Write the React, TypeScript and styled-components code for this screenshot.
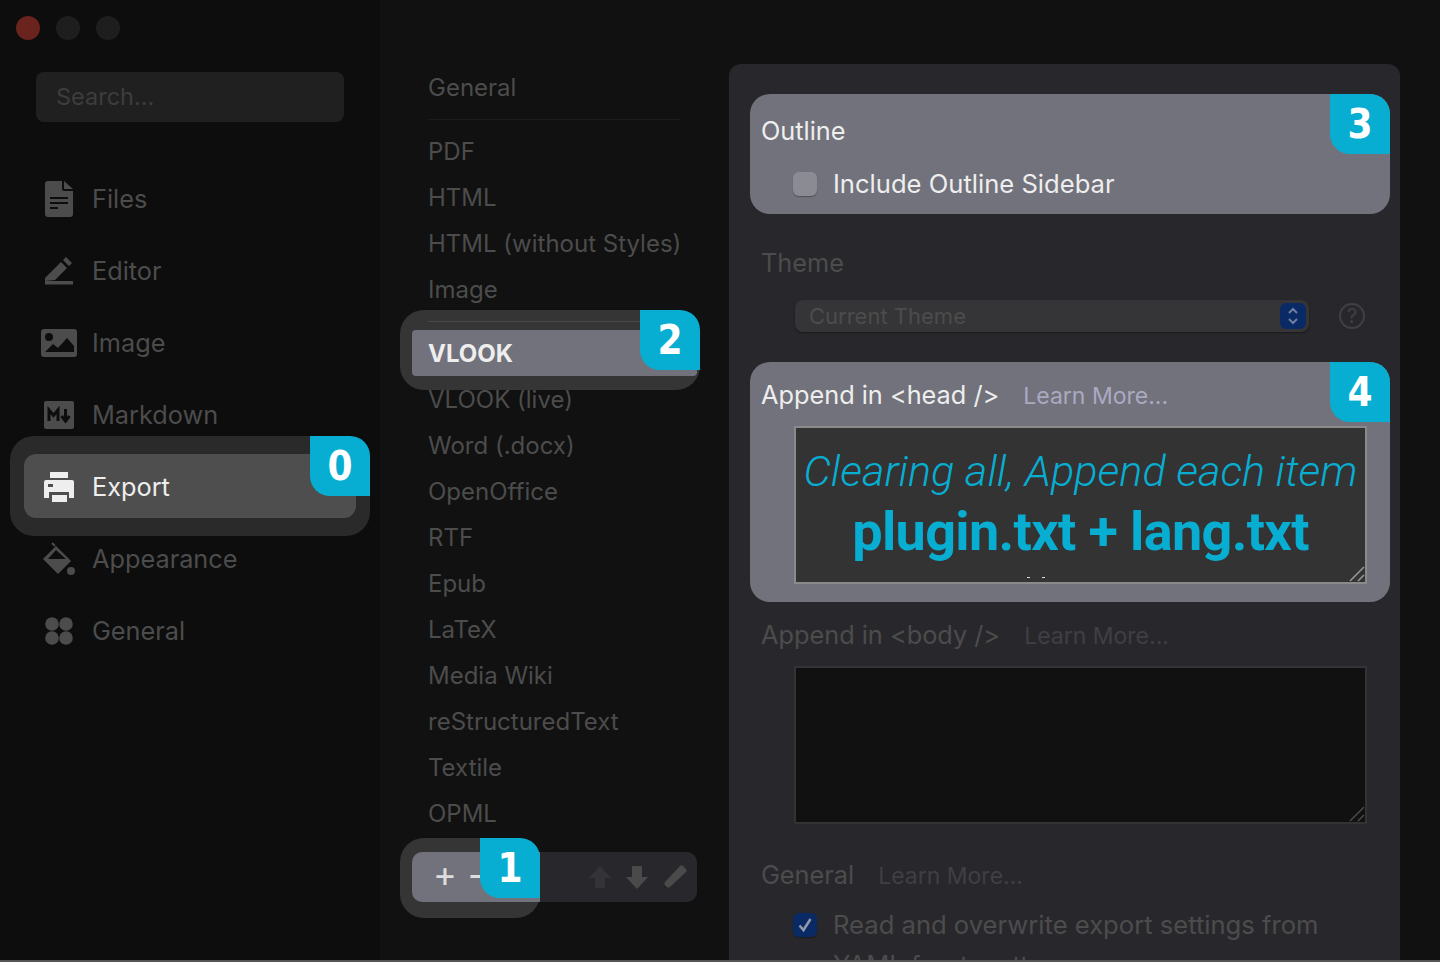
import styled, { createGlobalStyle } from "styled-components";

const GlobalStyle = createGlobalStyle`
  html, body {
    margin: 0;
    background: #111;
  }
  * {
    box-sizing: border-box;
  }
`;

const exportTypes = [
  "VLOOK (live)",
  "Word (.docx)",
  "OpenOffice",
  "RTF",
  "Epub",
  "LaTeX",
  "Media Wiki",
  "reStructuredText",
  "Textile",
  "OPML",
];

function FileIcon() {
  return (
    <svg width="28" height="36" viewBox="0 0 28 36">
      <path d="M3 0h14v8a2 2 0 0 0 2 2h9v23a3 3 0 0 1-3 3H3a3 3 0 0 1-3-3V3a3 3 0 0 1 3-3z" fill="currentColor" />
      <path d="M19 0l9 8h-9z" fill="currentColor" />
      <path d="M5 16h18v2H5zM5 21h18v2H5zM5 26h8v2H5z" fill="#0d0d0d" />
    </svg>
  );
}

function PenIcon() {
  return (
    <svg width="28" height="28" viewBox="0 0 28 28">
      <path d="M0 21L16 5l6 6-12 12-10 1zM18 3l3-3 6 6-3 3z" fill="currentColor" />
      <path d="M0 24h28v3.5H0z" fill="currentColor" />
    </svg>
  );
}

function ImageIcon() {
  return (
    <svg width="36" height="28" viewBox="0 0 36 28">
      <rect width="36" height="28" rx="3" fill="currentColor" />
      <circle cx="8" cy="8" r="4" fill="#0d0d0d" />
      <path d="M4 23l8-8 5 4 9-10 7 8v6z" fill="#0d0d0d" />
    </svg>
  );
}

function MarkdownIcon() {
  return (
    <svg width="30" height="28" viewBox="0 0 30 28">
      <rect width="30" height="28" rx="2" fill="currentColor" />
      <path d="M5 20V9l4.5 5.5L14 9v11" fill="none" stroke="#0d0d0d" strokeWidth="3" />
      <path d="M21.5 8v10M17.5 15l4 5 4-5" fill="none" stroke="#0d0d0d" strokeWidth="3" />
    </svg>
  );
}

function PrinterIcon() {
  return (
    <svg width="30" height="32" viewBox="0 0 30 32">
      <path d="M6 1h18v6H6z" fill="currentColor" />
      <path d="M2 9h26a2 2 0 0 1 2 2v16h-5v-6H5v6H0V11a2 2 0 0 1 2-2z" fill="currentColor" />
      <path d="M8 24h15v7H8z" fill="currentColor" />
      <path d="M4 13h5v3H4z" fill="#4e4e4e" />
    </svg>
  );
}

function BucketIcon() {
  return (
    <svg width="34" height="34" viewBox="0 0 34 34">
      <path d="M10 1l3 3" stroke="currentColor" strokeWidth="2" />
      <path d="M14 4l15 15-13 13L1 17z" fill="currentColor" />
      <path d="M6 17l8-9 10 9z" fill="#0d0d0d" />
      <circle cx="29" cy="29" r="4" fill="currentColor" />
    </svg>
  );
}

function DotsIcon() {
  return (
    <svg width="28" height="28" viewBox="0 0 28 28" fill="currentColor">
      <circle cx="7" cy="7" r="6.8" />
      <circle cx="21" cy="7" r="6.8" />
      <circle cx="7" cy="21" r="6.8" />
      <circle cx="21" cy="21" r="6.8" />
    </svg>
  );
}

function ResizeGrip({ $color }: { $color: string }) {
  return (
    <Grip width="16" height="16" viewBox="0 0 16 16">
      <path d="M1 15L15 1M9 15l6-6" stroke={$color} strokeWidth="1.5" />
    </Grip>
  );
}

const navItems = [
  { label: "Files", icon: <FileIcon /> },
  { label: "Editor", icon: <PenIcon /> },
  { label: "Image", icon: <ImageIcon /> },
  { label: "Markdown", icon: <MarkdownIcon /> },
  { label: "Export", icon: <PrinterIcon />, active: true },
  { label: "Appearance", icon: <BucketIcon /> },
  { label: "General", icon: <DotsIcon /> },
];

export default function App() {
  return (
    <Window>
      <GlobalStyle />
      <Sidebar>
        <TrafficLights>
          <Light $color="#6a231d" />
          <Light $color="#1e1e1e" />
          <Light $color="#1e1e1e" />
        </TrafficLights>
        <SearchBox>Search...</SearchBox>
        <Nav>
          {navItems.map((item) => (
            <NavItem key={item.label} $active={item.active}>
              <NavIcon>{item.icon}</NavIcon>
              {item.label}
              {item.active && <Badge>0</Badge>}
            </NavItem>
          ))}
        </Nav>
      </Sidebar>

      <ExportList>
        <ListRow>General</ListRow>
        <ListDivider />
        <ListRow>PDF</ListRow>
        <ListRow>HTML</ListRow>
        <ListRow>HTML (without Styles)</ListRow>
        <ListRow>Image</ListRow>
        <SelectedWrap>
          <ListDivider $bright />
          <SelectedRow>
            VLOOK
            <Badge $top={-20} $right={-3}>2</Badge>
          </SelectedRow>
        </SelectedWrap>
        {exportTypes.map((name) => (
          <ListRow key={name}>{name}</ListRow>
        ))}
        <Toolbar>
          <ToolGroup>
            <Sign>+</Sign>
            <Sign>−</Sign>
            <Badge $top={-14} $right={0}>1</Badge>
          </ToolGroup>
          <ToolIcons>
            <svg width="24" height="24" viewBox="0 0 24 24">
              <path d="M12 1l11 12h-6v10H7V13H1z" fill="#333338" />
            </svg>
            <svg width="24" height="24" viewBox="0 0 24 24">
              <path d="M7 1h10v11h6L12 24 1 12h6z" fill="#4a4a4a" />
            </svg>
            <svg width="26" height="26" viewBox="0 0 26 26">
              <path d="M1 25l2-7L18 2a2 2 0 0 1 3 0l3 3a2 2 0 0 1 0 3L8 23z" fill="#4a4a4a" />
              <path d="M1 25l1.2-4.5 3.3 3.3z" fill="#222" />
            </svg>
          </ToolIcons>
        </Toolbar>
      </ExportList>

      <Settings>
        <HighlightCard $height={120}>
          <CardTitle $height={74}>Outline</CardTitle>
          <CheckRow $top={-4} $left={32}>
            <Checkbox />
            <CheckLabel $bright>Include Outline Sidebar</CheckLabel>
          </CheckRow>
          <Badge $top={0} $right={0}>3</Badge>
        </HighlightCard>

        <SectionTitle $top={26}>Theme</SectionTitle>
        <SelectRow>
          <Select>
            Current Theme
            <Stepper>
              <svg width="12" height="18" viewBox="0 0 12 18" fill="none" stroke="#6f7f9f" strokeWidth="2">
                <path d="M2 6l4-4 4 4M2 12l4 4 4-4" />
              </svg>
            </Stepper>
          </Select>
          <Help>?</Help>
        </SelectRow>

        <HighlightCard $height={240} $top={30}>
          <CardTitle $height={64} $shift={2}>
            Append in &lt;head /&gt;
            <LearnMore $bright>Learn More...</LearnMore>
          </CardTitle>
          <HeadEditor>
            <LightLine>Clearing all, Append each item</LightLine>
            <BoldLine>plugin.txt + lang.txt</BoldLine>
            <Speck />
            <ResizeGrip $color="#9a9a9a" />
          </HeadEditor>
          <Badge $top={0} $right={0}>4</Badge>
        </HighlightCard>

        <SectionTitle $top={10}>
          Append in &lt;body /&gt;
          <LearnMore>Learn More...</LearnMore>
        </SectionTitle>
        <BodyEditor>
          <ResizeGrip $color="#4a4a4a" />
        </BodyEditor>

        <SectionTitle $top={28}>
          General
          <LearnMore>Learn More...</LearnMore>
        </SectionTitle>
        <CheckRow $top={7} $left={43}>
          <Checkbox $checked>
            <svg width="16" height="16" viewBox="0 0 16 16" fill="none" stroke="#8f97a8" strokeWidth="2.6">
              <path d="M2.5 8.5l4 4.5 7-11" />
            </svg>
          </Checkbox>
          <CheckLabel>
            Read and overwrite export settings from
            <br />
            YAML front matter
          </CheckLabel>
        </CheckRow>
      </Settings>
    </Window>
  );
}

const Window = styled.div`
  display: flex;
  width: 1440px;
  height: 962px;
  overflow: hidden;
  background: #111;
  border-bottom: 2px solid #555;
  font-family: Inter, "Noto Sans", sans-serif;
  color: #4c4c4c;
`;

const Sidebar = styled.aside`
  width: 380px;
  flex-shrink: 0;
  background: #0d0d0d;
  font-size: 25.3px;
  line-height: 30px;
`;

const TrafficLights = styled.div`
  display: flex;
  gap: 16px;
  padding: 16px 0 0 16px;
`;

const Light = styled.span<{ $color: string }>`
  width: 24px;
  height: 24px;
  border-radius: 50%;
  background: ${(p) => p.$color};
`;

const SearchBox = styled.div`
  width: 308px;
  height: 50px;
  margin: 32px 0 41px 36px;
  padding-left: 20px;
  display: flex;
  align-items: center;
  border-radius: 8px;
  background: #202020;
  font-size: 23.5px;
  color: #3d3d3d;
`;

const Nav = styled.nav`
  display: flex;
  flex-direction: column;
`;

const NavItem = styled.div<{ $active?: boolean }>`
  position: relative;
  z-index: ${(p) => (p.$active ? 1 : 0)};
  height: 72px;
  padding-left: 41px;
  display: flex;
  align-items: center;
  color: ${(p) => (p.$active ? "#eee" : "#4c4c4c")};

  ${(p) =>
    p.$active &&
    `
    &::before {
      content: "";
      position: absolute;
      z-index: -2;
      left: 10px;
      top: -15px;
      width: 360px;
      height: 100px;
      border-radius: 24px;
      background: #2a2a2a;
    }
    &::after {
      content: "";
      position: absolute;
      z-index: -1;
      left: 24px;
      top: 3px;
      width: 332px;
      height: 64px;
      border-radius: 12px;
      background: #4e4e4e;
    }
  `}
`;

const NavIcon = styled.span`
  width: 36px;
  margin-right: 15px;
  display: flex;
  justify-content: center;
`;

const Badge = styled.span<{ $top?: number; $right?: number }>`
  position: absolute;
  top: ${(p) => p.$top ?? -15}px;
  right: ${(p) => p.$right ?? 10}px;
  width: 60px;
  height: 60px;
  display: flex;
  align-items: center;
  justify-content: center;
  border-radius: 0 20px 0 20px;
  background: #07aed2;
  color: #fff;
  font-family: "DejaVu Sans Condensed", "DejaVu Sans", sans-serif;
  font-stretch: condensed;
  font-size: 40px;
  font-weight: 700;
`;

const ExportList = styled.section`
  width: 349px;
  flex-shrink: 0;
  padding: 64px 0 0 48px;
  font-size: 24px;
`;

const ListRow = styled.div`
  height: 46px;
  display: flex;
  align-items: center;
`;

const ListDivider = styled.div<{ $bright?: boolean }>`
  position: relative;
  width: 252px;
  height: 1px;
  margin: 9px 0 8px;
  background: ${(p) => (p.$bright ? "#4a4a4a" : "#1c1c1c")};
`;

const SelectedWrap = styled.div`
  position: relative;
  z-index: 1;

  &::before {
    content: "";
    position: absolute;
    z-index: -1;
    left: -28px;
    top: -11px;
    width: 300px;
    height: 80px;
    border-radius: 24px;
    background: #353535;
  }
`;

const SelectedRow = styled.div`
  position: relative;
  width: 285px;
  height: 46px;
  margin-left: -16px;
  padding-left: 16px;
  display: flex;
  align-items: center;
  border-radius: 4px;
  background: #72727c;
  color: #eee;
  font-weight: 700;
`;

const Toolbar = styled.div`
  width: 285px;
  height: 50px;
  margin: 16px 0 0 -16px;
  display: flex;
  border-radius: 10px;
  background: #28282c;
`;

const ToolGroup = styled.div`
  position: relative;
  z-index: 0;
  width: 128px;
  padding-left: 21px;
  display: flex;
  align-items: center;
  gap: 10px;
  color: #ddd;

  &::before {
    content: "";
    position: absolute;
    z-index: -2;
    left: -12px;
    top: -14px;
    width: 140px;
    height: 80px;
    border-radius: 24px;
    background: #353535;
  }

  &::after {
    content: "";
    position: absolute;
    z-index: -1;
    inset: 0;
    border-radius: 10px 0 0 10px;
    background: #72727c;
  }
`;

const Sign = styled.span`
  margin-bottom: 6px;
  font-size: 36px;
  line-height: 1;
`;

const ToolIcons = styled.div`
  margin-left: 48px;
  display: flex;
  align-items: center;
  gap: 13px;
`;

const Settings = styled.main`
  width: 671px;
  height: 900px;
  margin-top: 64px;
  padding: 30px 10px 0 21px;
  flex-shrink: 0;
  border-radius: 12px 12px 0 0;
  background: #28282c;
  font-size: 25.3px;
  line-height: 30px;
`;

const HighlightCard = styled.div<{ $height: number; $top?: number }>`
  position: relative;
  height: ${(p) => p.$height}px;
  margin-top: ${(p) => p.$top ?? 0}px;
  padding-left: 11px;
  border-radius: 20px;
  background: #72727c;
`;

const CardTitle = styled.div<{ $height: number; $shift?: number }>`
  height: ${(p) => p.$height}px;
  padding-top: ${(p) => p.$shift ?? 0}px;
  display: flex;
  align-items: center;
  color: #eee;
`;

const SectionTitle = styled.div<{ $top: number }>`
  height: 46px;
  margin-top: ${(p) => p.$top}px;
  padding-left: 11px;
  display: flex;
  align-items: center;
`;

const LearnMore = styled.span<{ $bright?: boolean }>`
  margin: 2px 0 0 24px;
  font-size: 23px;
  color: ${(p) => (p.$bright ? "#aba9c2" : "#3f3f44")};
`;

const CheckRow = styled.div<{ $top: number; $left: number }>`
  margin-top: ${(p) => p.$top}px;
  padding-left: ${(p) => p.$left}px;
  display: flex;
  align-items: flex-start;
  gap: 16px;
`;

const Checkbox = styled.span<{ $checked?: boolean }>`
  width: 24px;
  height: 24px;
  margin-top: 8px;
  flex-shrink: 0;
  display: flex;
  align-items: center;
  justify-content: center;
  border-radius: 6px;
  background: ${(p) => (p.$checked ? "#0a2a66" : "#8b8b94")};
  box-shadow: 0 1px 1px rgba(0, 0, 0, 0.3);
`;

const CheckLabel = styled.span<{ $bright?: boolean }>`
  font-size: 25.6px;
  line-height: 40px;
  color: ${(p) => (p.$bright ? "#eee" : "#4c4c4c")};
`;

const SelectRow = styled.div`
  margin-top: 14px;
  padding-left: 45px;
  display: flex;
  align-items: center;
  gap: 30px;
`;

const Select = styled.div`
  width: 514px;
  height: 32px;
  padding: 0 3px 0 14px;
  display: flex;
  align-items: center;
  justify-content: space-between;
  border-radius: 8px;
  background: #353537;
  box-shadow: 0 1px 2px rgba(0, 0, 0, 0.35);
  font-size: 22px;
  color: #4c4c4c;
`;

const Stepper = styled.span`
  width: 26px;
  height: 26px;
  display: flex;
  align-items: center;
  justify-content: center;
  border-radius: 6px;
  background: #0a2a66;
`;

const Help = styled.span`
  width: 26px;
  height: 26px;
  display: flex;
  align-items: center;
  justify-content: center;
  border: 2px solid #404044;
  border-radius: 50%;
  font-size: 20px;
  color: #404044;
`;

const HeadEditor = styled.div`
  position: relative;
  width: 573px;
  height: 158px;
  margin-left: 33px;
  overflow: hidden;
  border: 2px solid #8a8a8a;
  background: #333;
  color: #07aed2;
  text-align: center;
`;

const LightLine = styled.div`
  margin-top: 18px;
  font-family: Roboto, sans-serif;
  font-size: 43.3px;
  font-style: italic;
  font-weight: 300;
  line-height: 52px;
  white-space: nowrap;
`;

const BoldLine = styled.div`
  font-family: Roboto, sans-serif;
  font-size: 54px;
  font-weight: 700;
  letter-spacing: -0.65px;
  line-height: 68px;
  white-space: nowrap;
`;

const Speck = styled.span`
  position: absolute;
  left: 231px;
  bottom: 4px;
  width: 18px;
  height: 1px;
  background: linear-gradient(to right, #ddd 3px, transparent 3px, transparent 15px, #ddd 15px);
`;

const Grip = styled.svg`
  position: absolute;
  right: 0;
  bottom: 0;
`;

const BodyEditor = styled.div`
  position: relative;
  width: 573px;
  height: 158px;
  margin: 8px 0 0 44px;
  border: 2px solid #333336;
  background: #111;
`;
